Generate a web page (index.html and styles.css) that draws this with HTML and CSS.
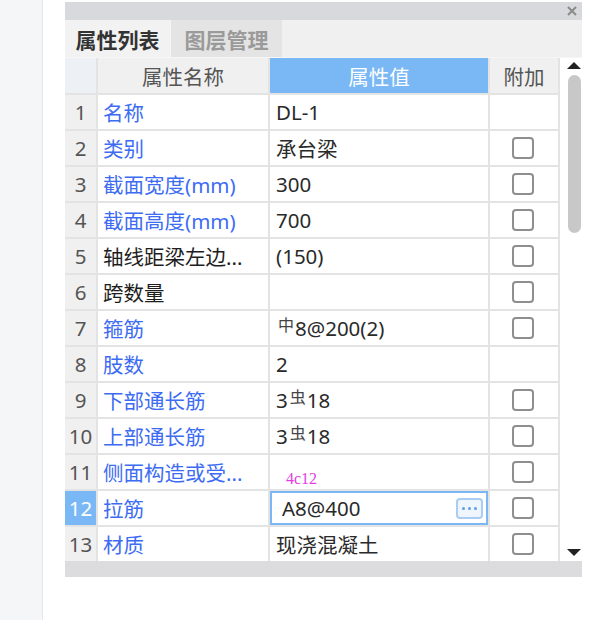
FILE: index.html
```html
<!DOCTYPE html>
<html lang="zh">
<head>
<meta charset="utf-8">
<title>属性列表</title>
<link rel="stylesheet" href="styles.css">
</head>
<body>
<div class="page">
  <div class="sidebar"></div>
  <div class="panel">
    <div class="titlebar">
      <svg class="close" width="10" height="10" viewBox="0 0 10 10"><path d="M1 1L9 9M9 1L1 9" stroke="#8a8a8a" stroke-width="2"/></svg>
    </div>
    <div class="tabs">
      <div class="tab active">属性列表</div>
      <div class="tab">图层管理</div>
    </div>
    <div class="body">
      <div class="grid">
        <div class="hc corner"></div>
        <div class="hc">属性名称</div>
        <div class="hc sel">属性值</div>
        <div class="hc">附加</div>

        <div class="num">1</div><div class="name blue">名称</div><div class="val">DL-1</div><div class="ext"></div>
        <div class="num">2</div><div class="name blue">类别</div><div class="val">承台梁</div><div class="ext"><span class="cb"></span></div>
        <div class="num">3</div><div class="name blue">截面宽度(mm)</div><div class="val">300</div><div class="ext"><span class="cb"></span></div>
        <div class="num">4</div><div class="name blue">截面高度(mm)</div><div class="val">700</div><div class="ext"><span class="cb"></span></div>
        <div class="num">5</div><div class="name">轴线距梁左边...</div><div class="val">(150)</div><div class="ext"><span class="cb"></span></div>
        <div class="num">6</div><div class="name">跨数量</div><div class="val"></div><div class="ext"><span class="cb"></span></div>
        <div class="num">7</div><div class="name blue">箍筋</div><div class="val"><span class="sym">中</span>8@200(2)</div><div class="ext"><span class="cb"></span></div>
        <div class="num">8</div><div class="name blue">肢数</div><div class="val">2</div><div class="ext"></div>
        <div class="num">9</div><div class="name blue">下部通长筋</div><div class="val">3<span class="sym">虫</span>18</div><div class="ext"><span class="cb"></span></div>
        <div class="num">10</div><div class="name blue">上部通长筋</div><div class="val">3<span class="sym">虫</span>18</div><div class="ext"><span class="cb"></span></div>
        <div class="num">11</div><div class="name blue">侧面构造或受...</div><div class="val"><span class="note">4c12</span></div><div class="ext"><span class="cb"></span></div>
        <div class="num cur">12</div><div class="name blue">拉筋</div><div class="val edit"><span class="etext">A8@400</span><span class="more"><i></i><i></i><i></i></span></div><div class="ext"><span class="cb"></span></div>
        <div class="num">13</div><div class="name blue">材质</div><div class="val">现浇混凝土</div><div class="ext"><span class="cb"></span></div>
      </div>
      <div class="scroll">
        <div class="arrow up"></div>
        <div class="thumb"></div>
        <div class="spacer"></div>
        <div class="arrow down"></div>
      </div>
    </div>
    <div class="hbar"></div>
  </div>
</div>
</body>
</html>
```

FILE: styles.css
```css
* { box-sizing: border-box; }
html, body { margin: 0; padding: 0; background: #ffffff; }
body {
  font-family: "Noto Sans", "Noto Sans CJK SC", sans-serif;
  width: 612px;
  height: 620px;
  overflow: hidden;
}
.page { display: flex; height: 620px; }
.sidebar {
  width: 43px;
  background: #f5f6f7;
  border-right: 1px solid #e6e7e8;
}
.panel {
  margin-left: 22px;
  width: 517px;
  padding-top: 2px;
}
.titlebar {
  height: 18px;
  background: #d8d9dc;
  display: flex;
  justify-content: flex-end;
  align-items: center;
  padding-right: 5px;
}
.close { display: block; }
.tabs {
  height: 38px;
  background: #f0f0f0;
  display: flex;
  border-bottom: 1px solid #f6f6f6;
}
.tab {
  display: flex;
  align-items: center;
  justify-content: center;
  font-size: 21px;
  color: #9a9a9a;
  font-weight: 700;
  width: 112px;
  background: #e4e4e4;
  border-left: 1px solid #f4f4f4;
}
.tab.active {
  width: 105px;
  background: #f2f2f2;
  color: #333333;
  border-left: none;
}
.body { display: flex; }
.grid {
  display: grid;
  grid-template-columns: 31px 170px 218px 68px;
  grid-template-rows: 35px repeat(13, 34px);
  gap: 2px;
  background: #e3e3e3;
  padding-right: 2px;
  font-size: 20.5px;
}
.grid > div {
  display: flex;
  align-items: center;
  white-space: nowrap;
  overflow: hidden;
  position: relative;
  background: #ffffff;
}
.hc {
  justify-content: center;
  background: #f0f0f0 !important;
  color: #555555;
}
.hc.corner { background: #edf1f6 !important; }
.hc.sel { background: #7ab8f5 !important; color: #ffffff; }
.num {
  justify-content: center;
  background: #f0f0f0 !important;
  color: #555555;
}
.num.cur { background: #7ab8f5 !important; color: #ffffff; }
.name { padding-left: 5px; color: #1e1e1e; }
.name.blue { color: #3d6cf3; }
.val { padding-left: 6px; color: #2a2a2a; }
.ext { justify-content: center; }
.cb {
  width: 22px;
  height: 22px;
  border: 2px solid #8e8e8e;
  border-radius: 4px;
  margin-left: -2px;
}
.sym {
  font-size: 16px;
  position: relative;
  top: -4px;
  margin: 0 1px 0 2px;
  color: #444444;
}
.note {
  position: absolute;
  left: 16px;
  bottom: 1px;
  font-family: "Liberation Serif", serif;
  font-size: 16px;
  color: #e43ee4;
}
.val.edit {
  box-shadow: inset 0 0 0 2px #7ab8f5;
  padding-left: 12px;
  justify-content: space-between;
  padding-right: 5px;
}
.more {
  width: 27px;
  height: 21px;
  border: 2px solid #a9cdf3;
  border-radius: 4px;
  background: #eef5fd;
  display: flex;
  align-items: center;
  justify-content: center;
  gap: 3px;
}
.more i {
  display: block;
  width: 3px;
  height: 3px;
  border-radius: 50%;
  background: #5d9de2;
}
.scroll {
  width: 22px;
  display: flex;
  flex-direction: column;
  padding: 4px 0 5px 7px;
  background: #ffffff;
}
.arrow { width: 0; height: 0; border-left: 7px solid transparent; border-right: 7px solid transparent; }
.arrow.up { border-bottom: 7px solid #222222; }
.arrow.down { border-top: 7px solid #222222; }
.thumb {
  margin-top: 6px;
  margin-left: 1px;
  width: 13px;
  height: 158px;
  border-radius: 7px;
  background: #c8c8c8;
}
.spacer { flex: 1; }
.hbar {
  height: 16px;
  background: #dcdcde;
}
```
